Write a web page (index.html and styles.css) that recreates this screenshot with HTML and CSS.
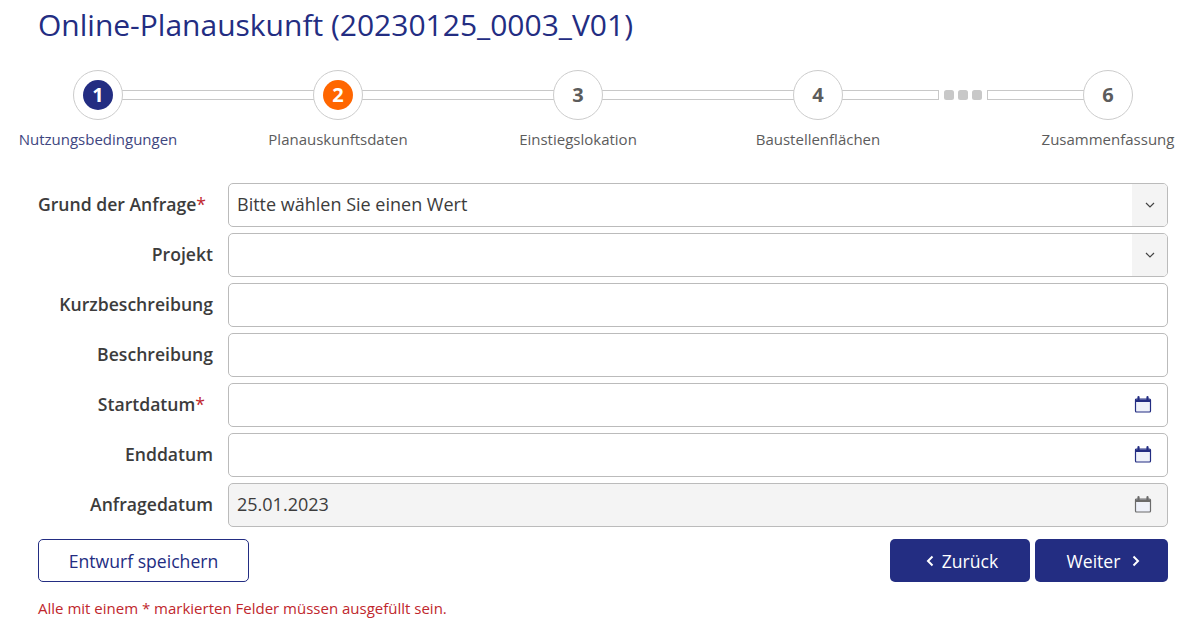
FILE: index.html
```html
<!DOCTYPE html>
<html lang="de">
<head>
<meta charset="utf-8">
<title>Online-Planauskunft</title>
<link rel="stylesheet" href="styles.css">
</head>
<body>
<svg class="sprite" width="0" height="0" aria-hidden="true">
  <symbol id="cal" viewBox="0 0 18 18">
    <path d="M2.500 3h13a1 1 0 0 1 1 1v11a1 1 0 0 1-1 1h-13a1 1 0 0 1-1-1V4a1 1 0 0 1 1-1z" fill="#eef1fa" stroke="currentColor" stroke-width="1.200"/>
    <path d="M1.500 3.500h15v2.500h-15z" fill="currentColor"/>
    <path d="M4.500 1.200v3M13.500 1.200v3" stroke="currentColor" stroke-width="2.200" stroke-linecap="round"/>
  </symbol>
  <symbol id="chev" viewBox="0 0 10 6">
    <path d="M1 1l4 4 4-4" fill="none" stroke="currentColor" stroke-width="1.200"/>
  </symbol>
  <symbol id="left" viewBox="0 0 8 12">
    <path d="M6.500 1.500L2 6l4.500 4.500" fill="none" stroke="currentColor" stroke-width="2"/>
  </symbol>
  <symbol id="right" viewBox="0 0 8 12">
    <path d="M1.500 1.500L6 6l-4.500 4.500" fill="none" stroke="currentColor" stroke-width="2"/>
  </symbol>
</svg>
<main class="page">
  <h1 class="title">Online-Planauskunft (20230125_0003_V01)</h1>
  <div class="track">
    <div class="circle"><span class="num num-active">1</span></div>
    <div class="bar bar-long"></div>
    <div class="circle"><span class="num num-current">2</span></div>
    <div class="bar bar-long"></div>
    <div class="circle"><span class="num">3</span></div>
    <div class="bar bar-long"></div>
    <div class="circle"><span class="num">4</span></div>
    <div class="bar bar-short"></div>
    <div class="dots"><i></i><i></i><i></i></div>
    <div class="bar bar-short"></div>
    <div class="circle"><span class="num">6</span></div>
  </div>
  <div class="labels">
    <span class="label label-active">Nutzungsbedingungen</span>
    <span class="label">Planauskunftsdaten</span>
    <span class="label">Einstiegslokation</span>
    <span class="label">Baustellenflächen</span>
    <span class="label label-last">Zusammenfassung</span>
  </div>
  <form class="form">
    <div class="row">
      <label class="field-label required">Grund der Anfrage<em>*</em></label>
      <div class="input"><span class="value">Bitte wählen Sie einen Wert</span><span class="addon"><svg class="chev"><use href="#chev"/></svg></span></div>
    </div>
    <div class="row">
      <label class="field-label">Projekt</label>
      <div class="input"><span class="value"></span><span class="addon"><svg class="chev"><use href="#chev"/></svg></span></div>
    </div>
    <div class="row">
      <label class="field-label">Kurzbeschreibung</label>
      <div class="input"><span class="value"></span></div>
    </div>
    <div class="row">
      <label class="field-label">Beschreibung</label>
      <div class="input"><span class="value"></span></div>
    </div>
    <div class="row">
      <label class="field-label required">Startdatum<em>*</em></label>
      <div class="input"><span class="value"></span><svg class="cal"><use href="#cal"/></svg></div>
    </div>
    <div class="row">
      <label class="field-label">Enddatum</label>
      <div class="input"><span class="value"></span><svg class="cal"><use href="#cal"/></svg></div>
    </div>
    <div class="row">
      <label class="field-label">Anfragedatum</label>
      <div class="input input-disabled"><span class="value">25.01.2023</span><svg class="cal"><use href="#cal"/></svg></div>
    </div>
    <div class="actions">
      <button type="button" class="btn btn-outline">Entwurf speichern</button>
      <div class="nav">
        <button type="button" class="btn btn-solid btn-back"><svg class="arrow"><use href="#left"/></svg>Zurück</button>
        <button type="button" class="btn btn-solid btn-next">Weiter<svg class="arrow"><use href="#right"/></svg></button>
      </div>
    </div>
    <p class="note">Alle mit einem * markierten Felder müssen ausgefüllt sein.</p>
  </form>
</main>
</body>
</html>
```
FILE: styles.css
```css
html, body { margin: 0; padding: 0; background: #fff; overflow: hidden; }
body { font-family: "Open Sans", "Noto Sans", sans-serif; color: #3c3c3c; }
.sprite { position: absolute; }
.page { width: 1182px; height: 626px; }
.title { margin: 0; padding: 5px 0 0 38px; height: 70px; box-sizing: border-box; font-size: 30px; line-height: 40px; font-weight: 400; color: #232d82; }
.track { display: flex; align-items: center; height: 50px; padding-left: 74px; }
.circle { width: 50px; height: 50px; box-sizing: border-box; border: 1px solid #ccc; border-radius: 50%; display: flex; align-items: center; justify-content: center; background: #fff; flex: none; margin: 0 -1px; position: relative; z-index: 1; }
.num { width: 30px; height: 30px; box-sizing: border-box; padding-bottom: 2px; border-radius: 50%; display: flex; align-items: center; justify-content: center; font-size: 20px; font-weight: 700; color: #5c5c5c; }
.num-active { background: #232d82; color: #fff; }
.num-current { background: #ff6600; color: #fff; }
.bar { height: 10px; box-sizing: border-box; border: 1px solid #c8c8c8; flex: none; }
.bar-long { width: 192px; border-left: 0; border-right: 0; }
.bar-short { width: 97px; }
.track .circle + .bar-short { border-left: 0; }
.dots + .bar-short { border-right: 0; }
.dots { display: flex; gap: 4px; margin: 0 5px; }
.dots i { width: 10px; height: 10px; border-radius: 2.5px; background: #c8c8c8; }
.labels { display: flex; gap: 80px; padding: 9px 0 0 18px; height: 54px; }
.label { width: 160px; flex: none; text-align: center; font-size: 15px; line-height: 20px; color: #5c5c5c; white-space: nowrap; }
.label-active { color: #3e4680; }
.label-last { margin-left: 60px; width: 140px; }
.form { display: flex; flex-direction: column; gap: 6px; padding: 0 14px 0 38px; }
.row { display: flex; height: 44px; align-items: center; }
.field-label { width: 175px; flex: none; margin-bottom: 2px; text-align: right; font-size: 17.6px; font-weight: 600; color: #3c3c3c; white-space: nowrap; }
.field-label em { color: #c0272d; font-style: normal; font-weight: 400; }
.required { padding-right: 8px; box-sizing: border-box; }
.input { margin-left: 15px; flex: 1; height: 44px; box-sizing: border-box; border: 1px solid #bbb; border-radius: 5px; display: flex; align-items: center; justify-content: space-between; overflow: hidden; font-size: 18px; color: #3c3c3c; }
.input-disabled { background: #f4f4f4; }
.value { padding-left: 8px; margin-bottom: 2px; }
.addon { width: 35px; height: 100%; background: #f4f4f4; display: flex; align-items: center; justify-content: center; }
.chev { width: 10px; height: 6px; color: #444; }
.cal { width: 18px; height: 18px; margin-right: 15px; color: #232d82; }
.input-disabled .cal { color: #6b6b6b; }
.actions { display: flex; justify-content: space-between; margin-top: 6px; }
.nav { display: flex; gap: 5px; }
.btn { height: 43px; box-sizing: border-box; border-radius: 5px; font-family: inherit; font-size: 17.6px; display: flex; align-items: center; justify-content: center; padding: 0; }
.btn-outline { width: 211px; background: #fff; border: 1px solid #232d82; color: #232d82; }
.btn-solid { background: #232d82; color: #fff; border: 0; padding-left: 4px; }
.btn-back { width: 140px; }
.btn-next { width: 133px; }
.arrow { width: 8px; height: 12px; flex: none; }
.btn-back .arrow { margin-right: 8px; }
.btn-next .arrow { margin-left: 12px; }
.note { margin: 10px 0 0; font-size: 15px; line-height: 20px; color: #c0272d; }
```
